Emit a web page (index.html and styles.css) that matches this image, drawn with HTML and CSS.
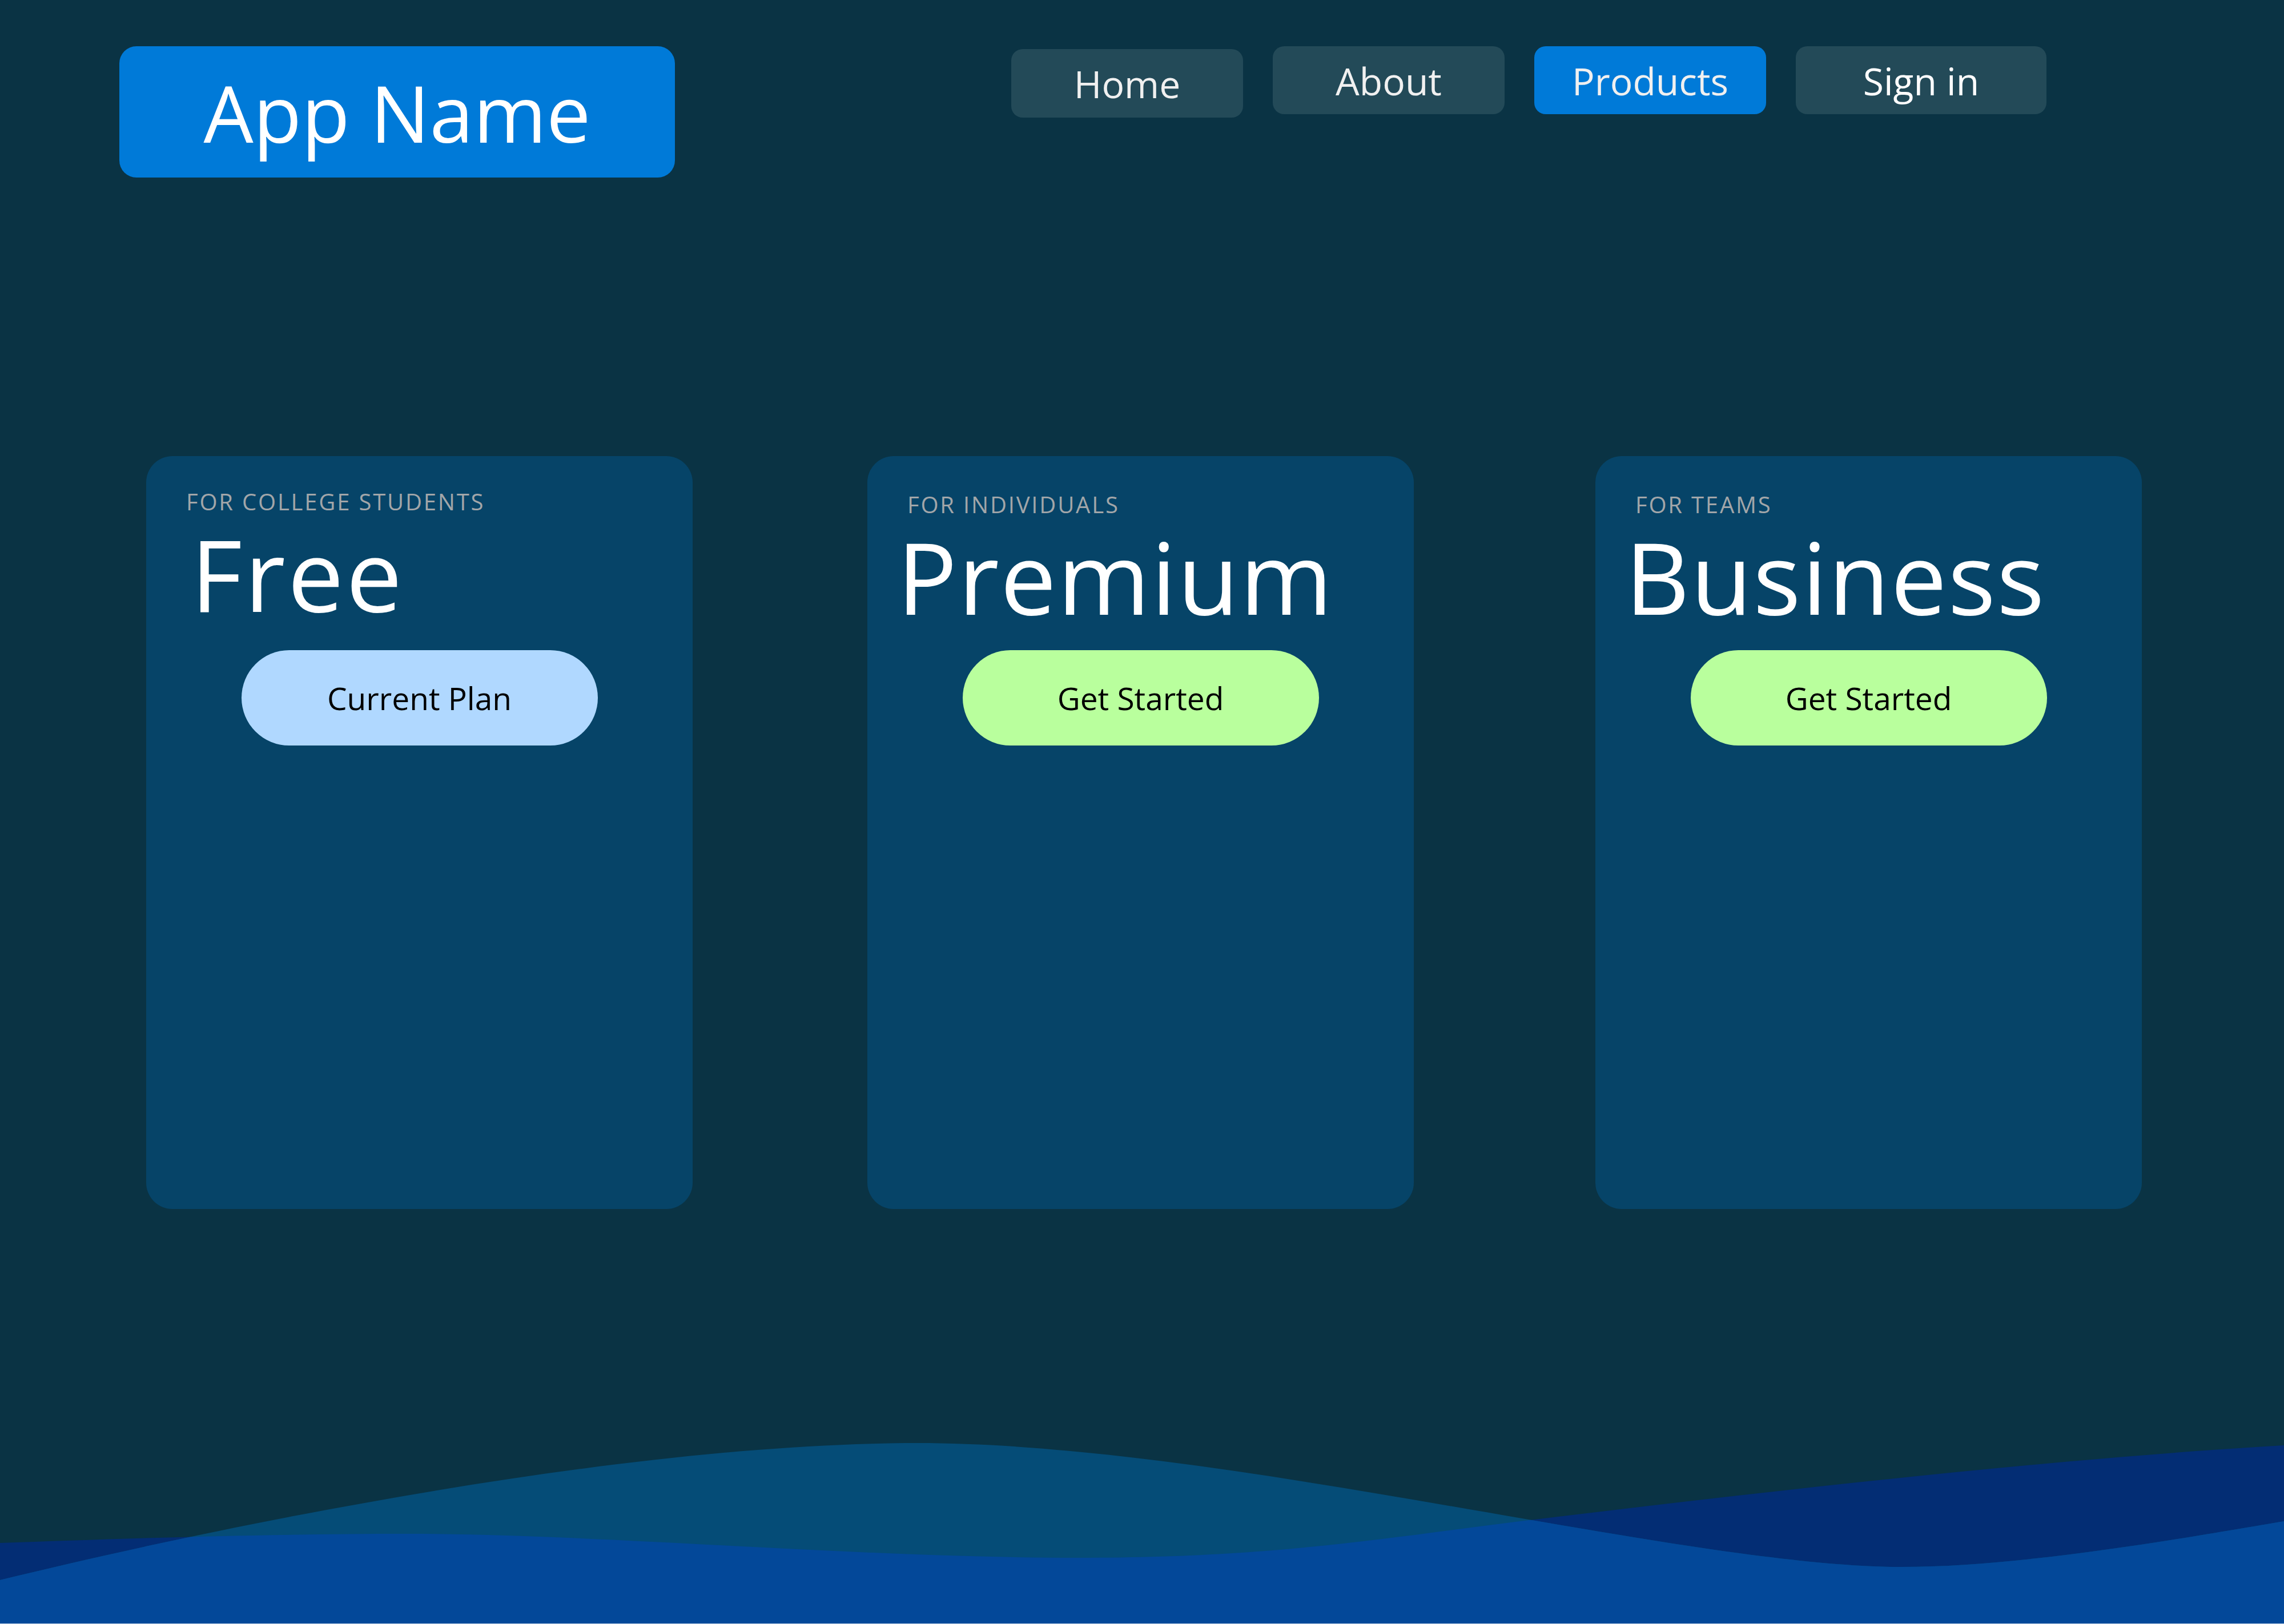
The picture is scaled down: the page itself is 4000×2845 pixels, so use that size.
FILE: index.html
```html
<!DOCTYPE html>
<html lang="en">
<head>
<meta charset="utf-8">
<title>App Name — Plans</title>
<link rel="stylesheet" href="styles.css">
</head>
<body>
<div class="page">
  <header class="topbar">
    <div class="logo">App Name</div>
    <nav class="nav">
      <a class="nav-btn nav-btn--home">Home</a>
      <a class="nav-btn">About</a>
      <a class="nav-btn nav-btn--active">Products</a>
      <a class="nav-btn nav-btn--wide">Sign in</a>
    </nav>
  </header>

  <main class="plans">
    <section class="card card--free">
      <div class="card-head">
        <div class="card-label">FOR COLLEGE STUDENTS</div>
        <h2 class="card-title">Free</h2>
      </div>
      <button class="plan-btn plan-btn--current">Current Plan</button>
    </section>
    <section class="card">
      <div class="card-head">
        <div class="card-label">FOR INDIVIDUALS</div>
        <h2 class="card-title">Premium</h2>
      </div>
      <button class="plan-btn plan-btn--start">Get Started</button>
    </section>
    <section class="card">
      <div class="card-head">
        <div class="card-label">FOR TEAMS</div>
        <h2 class="card-title">Business</h2>
      </div>
      <button class="plan-btn plan-btn--start">Get Started</button>
    </section>
  </main>

  <svg class="waves" viewBox="0 0 4000 344" preserveAspectRatio="none" aria-hidden="true">
    <defs>
      <clipPath id="hill">
        <path d="M0,268 C400,170 1100,28 1607,28 C2150,28 2950,245 3329,245 C3550,245 3850,190 4000,165 L4000,344 L0,344 Z"/>
      </clipPath>
    </defs>
    <path class="wave-navy" d="M0,203 C200,196 450,187 714,187 C1050,187 1500,229 1888,229 C2250,229 2450,190 2704,160 C3100,112 3600,55 4000,32 L4000,344 L0,344 Z"/>
    <path class="wave-teal" d="M0,268 C400,170 1100,28 1607,28 C2150,28 2950,245 3329,245 C3550,245 3850,190 4000,165 L4000,344 L0,344 Z"/>
    <path class="wave-blue" clip-path="url(#hill)" d="M0,203 C200,196 450,187 714,187 C1050,187 1500,229 1888,229 C2250,229 2450,190 2704,160 C3100,112 3600,55 4000,32 L4000,344 L0,344 Z"/>
  </svg>
</div>
</body>
</html>
```

FILE: styles.css
```css
html {
  background: #b9cde4;
}

body {
  margin: 0;
  font-family: "Open Sans", "Noto Sans", sans-serif;
}

.page {
  position: relative;
  height: 2844px;
  overflow: hidden;
  background: #0a3344;
}

/* ---------- Header ---------- */
.topbar {
  display: flex;
  justify-content: space-between;
  align-items: flex-start;
  padding: 81px 416px 0 209px;
}

.logo {
  width: 973px;
  height: 230px;
  display: flex;
  align-items: center;
  justify-content: center;
  background: #007ad8;
  border-radius: 30px;
  color: #ffffff;
  font-size: 138px;
  line-height: 1;
}

.nav {
  display: flex;
  gap: 52px;
  align-items: flex-start;
}

.nav-btn {
  width: 406px;
  height: 119px;
  display: flex;
  align-items: center;
  justify-content: center;
  background: #234a58;
  border-radius: 20px;
  color: #f0f0f0;
  font-size: 66px;
  line-height: 1;
  cursor: pointer;
}

.nav-btn--home {
  margin-top: 5px;
  height: 120px;
}

.nav-btn--active {
  background: #007ad8;
}

.nav-btn--wide {
  width: 439px;
  color: #ffffff;
}

/* ---------- Plans ---------- */
.plans {
  display: flex;
  gap: 306px;
  padding: 0 0 0 256px;
  margin-top: 488px;
}

.card {
  width: 957px;
  height: 1319px;
  box-sizing: border-box;
  padding: 65px 0 0 70px;
  background: #064468;
  border-radius: 46px;
  display: flex;
  flex-direction: column;
  flex-shrink: 0;
}

.card:last-child {
  margin-left: 12px;
}

.card-head {
  height: 275px;
}

.card-label {
  color: #a2a6a9;
  font-size: 40px;
  line-height: 1;
  letter-spacing: 2.8px;
}

.card-title {
  margin: 40px 0 0 -18px;
  color: #ffffff;
  font-size: 175px;
  font-weight: 400;
  line-height: 0.75;
  letter-spacing: 2px;
}

.card--free .card-label {
  margin-top: -5px;
}

.card--free .card-title {
  margin-left: 8px;
  letter-spacing: 4px;
}

.plan-btn {
  align-self: center;
  margin-left: -70px;
  width: 624px;
  height: 167px;
  border: 0;
  border-radius: 84px;
  font-family: "Open Sans", "Noto Sans", sans-serif;
  font-size: 55px;
  line-height: 1;
  color: #000000;
  cursor: pointer;
  padding: 0;
}

.plan-btn--current {
  background: #b0d8ff;
}

.plan-btn--start {
  background: #b9ff9d;
}

/* ---------- Waves ---------- */
.waves {
  position: absolute;
  left: 0;
  bottom: 0;
  width: 4000px;
  height: 344px;
  display: block;
}

.wave-navy {
  fill: #032d74;
}

.wave-teal {
  fill: #054c77;
}

.wave-blue {
  fill: #034899;
}
```
